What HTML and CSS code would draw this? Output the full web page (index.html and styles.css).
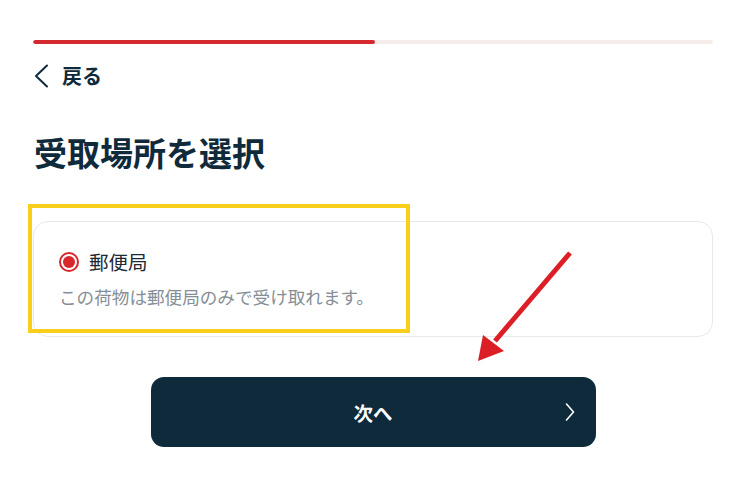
FILE: index.html
```html
<!DOCTYPE html>
<html lang="ja">
<head>
<meta charset="utf-8">
<title>受取場所を選択</title>
<link rel="stylesheet" href="styles.css">
</head>
<body>
<div class="page">
  <div class="progress"><div class="progress-fill" style="width:50.3%"></div></div>

  <a class="back" href="#">
    <svg class="back-icon" width="16" height="24" viewBox="0 0 16 24"><polyline points="14,1.5 3,12 14,22.5" fill="none" stroke="#0f2a3a" stroke-width="2" stroke-linecap="round" stroke-linejoin="round"/></svg>
    <span>戻る</span>
  </a>

  <h1 class="title">受取場所を選択</h1>

  <div class="option-area">
    <label class="option">
      <span class="option-head">
        <span class="radio"><span class="radio-dot"></span></span>
        <span class="option-name">郵便局</span>
      </span>
      <span class="option-desc">この荷物は郵便局のみで受け取れます。</span>
    </label>
    <div class="highlight"></div>
    <svg class="arrow" width="120" height="130" viewBox="0 0 120 130">
      <line x1="97" y1="13" x2="22" y2="101" stroke="#dc1f26" stroke-width="5" stroke-linecap="butt"/>
      <polygon points="5,121 10,95 31,111" fill="#dc1f26"/>
    </svg>
  </div>

  <div class="actions">
    <button class="next" type="button">
      <span class="next-label">次へ</span>
      <svg class="next-icon" width="10" height="18" viewBox="0 0 10 18"><polyline points="1.5,1 8.5,9 1.5,17" fill="none" stroke="#ffffff" stroke-width="1.6" stroke-linecap="round" stroke-linejoin="round"/></svg>
    </button>
  </div>
</div>
</body>
</html>
```

FILE: styles.css
```css
* { box-sizing: border-box; }

html, body {
  margin: 0;
  padding: 0;
  background: #ffffff;
}

body {
  font-family: "Noto Sans CJK JP", "Noto Sans", sans-serif;
  color: #0f2a3a;
}

.page {
  width: 680px;
  margin-left: 33px;
  padding-top: 40px;
}

.progress {
  height: 4px;
  border-radius: 2px;
  background: #f6ecea;
  overflow: hidden;
}

.progress-fill {
  height: 100%;
  background: #d42a2f;
  border-radius: 2px;
}

.back {
  margin-top: 20px;
  height: 24px;
  display: flex;
  align-items: center;
  gap: 13px;
  color: #0f2a3a;
  text-decoration: none;
  font-weight: 700;
  font-size: 20px;
  line-height: 24px;
}

.back-icon { display: block; }

.title {
  margin: 42px 0 0 1px;
  font-size: 33px;
  line-height: 44px;
  font-weight: 700;
  color: #0f2a3a;
}

.option-area {
  position: relative;
  margin-top: 47px;
}

.option {
  display: flex;
  flex-direction: column;
  border: 1px solid #e6eaed;
  border-radius: 15px;
  padding: 26px 25px 27px 25px;
  height: 116px;
}

.option-head {
  display: flex;
  align-items: center;
  gap: 10px;
  height: 28px;
}

.radio {
  width: 20px;
  height: 20px;
  border-radius: 50%;
  border: 2px solid #d8262d;
  display: flex;
  align-items: center;
  justify-content: center;
  flex: none;
}

.radio-dot {
  width: 12px;
  height: 12px;
  border-radius: 50%;
  background: #d8262d;
}

.option-name {
  font-size: 19.5px;
  line-height: 28px;
  color: #1d2a33;
}

.option-desc {
  margin-top: 9px;
  font-size: 17.6px;
  line-height: 24px;
  color: #858e96;
}

.highlight {
  position: absolute;
  left: -5px;
  top: -17px;
  width: 382px;
  height: 129px;
  border: 4px solid #f9cf1c;
  pointer-events: none;
}

.arrow {
  position: absolute;
  left: 440px;
  top: 19px;
}

.actions {
  margin-top: 40px;
  display: flex;
  justify-content: center;
}

.next {
  position: relative;
  width: 445px;
  height: 70px;
  border: none;
  border-radius: 13px;
  background: #0e2a3b;
  color: #ffffff;
  font-family: inherit;
  font-size: 19.5px;
  font-weight: 700;
  display: flex;
  align-items: center;
  justify-content: center;
  padding: 0;
}

.next-icon {
  position: absolute;
  right: 21px;
  top: 26px;
}
```
